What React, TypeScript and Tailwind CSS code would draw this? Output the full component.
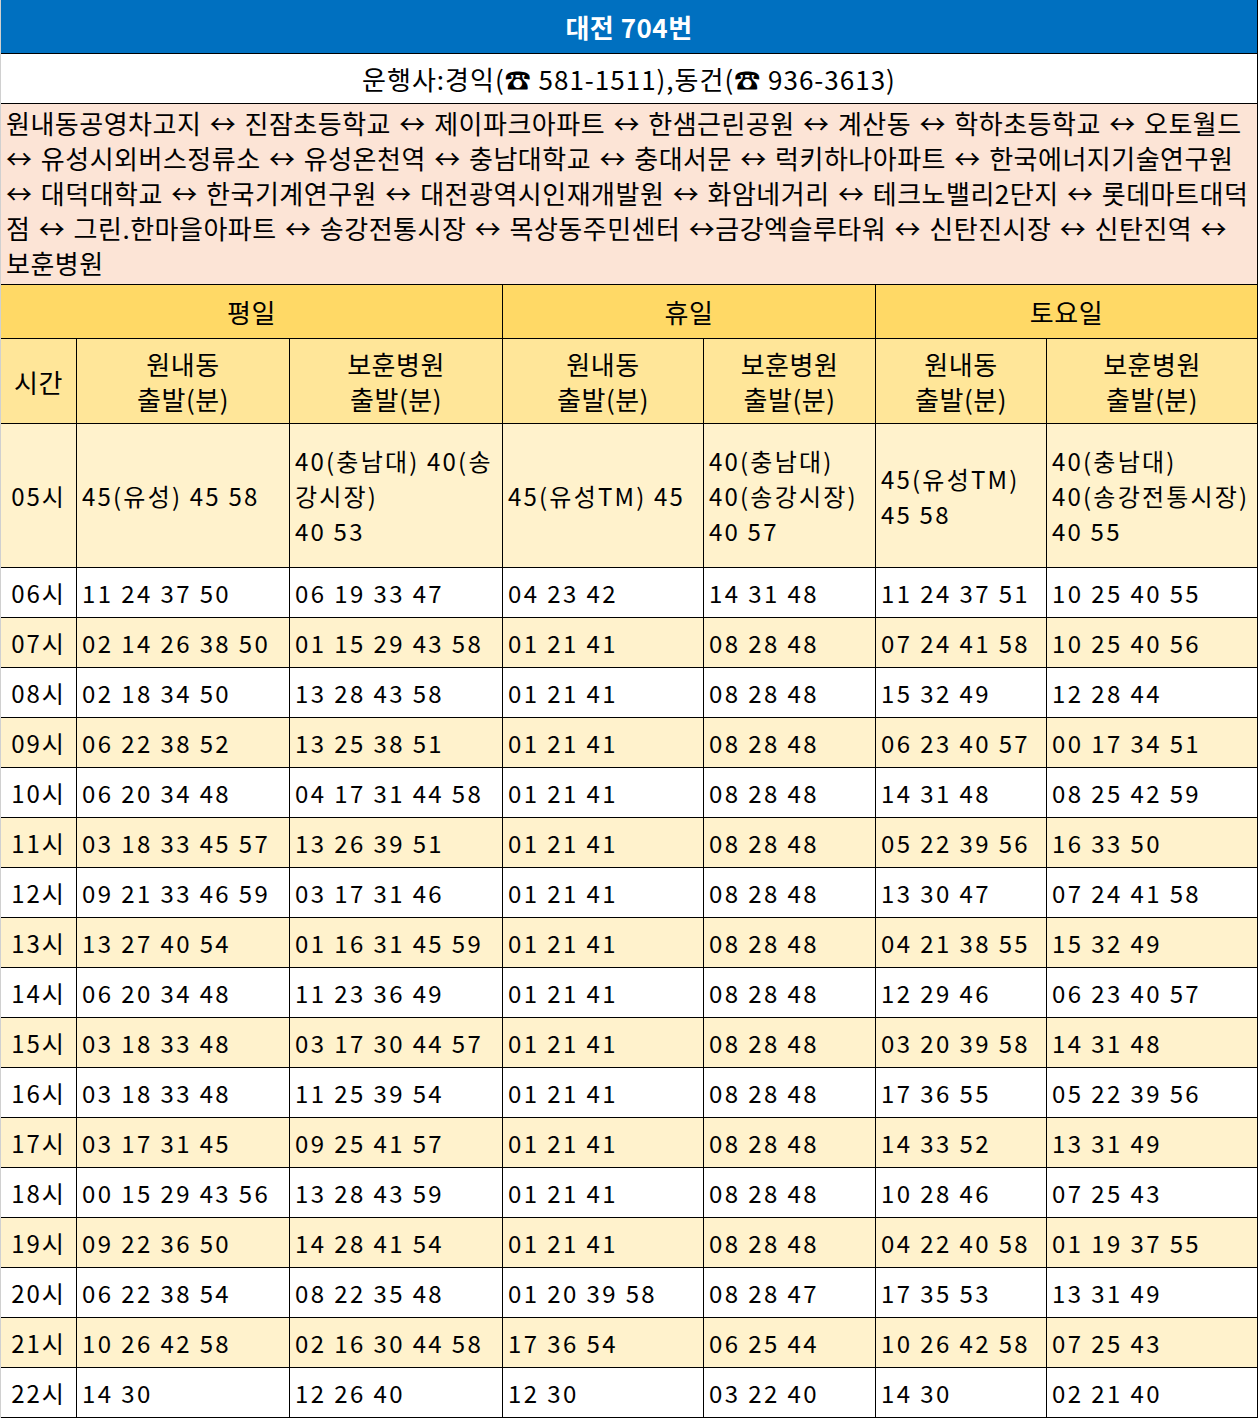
import React from "react";

type Row = [string, string, string, string, string, string, string];

const rows: Row[] = [
  ["06시", "11 24 37 50", "06 19 33 47", "04 23 42", "14 31 48", "11 24 37 51", "10 25 40 55"],
  ["07시", "02 14 26 38 50", "01 15 29 43 58", "01 21 41", "08 28 48", "07 24 41 58", "10 25 40 56"],
  ["08시", "02 18 34 50", "13 28 43 58", "01 21 41", "08 28 48", "15 32 49", "12 28 44"],
  ["09시", "06 22 38 52", "13 25 38 51", "01 21 41", "08 28 48", "06 23 40 57", "00 17 34 51"],
  ["10시", "06 20 34 48", "04 17 31 44 58", "01 21 41", "08 28 48", "14 31 48", "08 25 42 59"],
  ["11시", "03 18 33 45 57", "13 26 39 51", "01 21 41", "08 28 48", "05 22 39 56", "16 33 50"],
  ["12시", "09 21 33 46 59", "03 17 31 46", "01 21 41", "08 28 48", "13 30 47", "07 24 41 58"],
  ["13시", "13 27 40 54", "01 16 31 45 59", "01 21 41", "08 28 48", "04 21 38 55", "15 32 49"],
  ["14시", "06 20 34 48", "11 23 36 49", "01 21 41", "08 28 48", "12 29 46", "06 23 40 57"],
  ["15시", "03 18 33 48", "03 17 30 44 57", "01 21 41", "08 28 48", "03 20 39 58", "14 31 48"],
  ["16시", "03 18 33 48", "11 25 39 54", "01 21 41", "08 28 48", "17 36 55", "05 22 39 56"],
  ["17시", "03 17 31 45", "09 25 41 57", "01 21 41", "08 28 48", "14 33 52", "13 31 49"],
  ["18시", "00 15 29 43 56", "13 28 43 59", "01 21 41", "08 28 48", "10 28 46", "07 25 43"],
  ["19시", "09 22 36 50", "14 28 41 54", "01 21 41", "08 28 48", "04 22 40 58", "01 19 37 55"],
  ["20시", "06 22 38 54", "08 22 35 48", "01 20 39 58", "08 28 47", "17 35 53", "13 31 49"],
  ["21시", "10 26 42 58", "02 16 30 44 58", "17 36 54", "06 25 44", "10 26 42 58", "07 25 43"],
  ["22시", "14 30", "12 26 40", "12 30", "03 22 40", "14 30", "02 21 40"],
];

const routeLines = [
  "원내동공영차고지 ↔ 진잠초등학교 ↔ 제이파크아파트 ↔ 한샘근린공원 ↔ 계산동 ↔ 학하초등학교 ↔ 오토월드",
  "↔ 유성시외버스정류소 ↔ 유성온천역 ↔ 충남대학교 ↔ 충대서문 ↔ 럭키하나아파트 ↔ 한국에너지기술연구원",
  "↔ 대덕대학교 ↔ 한국기계연구원 ↔ 대전광역시인재개발원 ↔ 화암네거리 ↔ 테크노밸리2단지 ↔ 롯데마트대덕",
  "점 ↔ 그린.한마을아파트 ↔ 송강전통시장 ↔ 목상동주민센터 ↔금강엑슬루타워 ↔ 신탄진시장 ↔ 신탄진역 ↔",
  "보훈병원",
];

const cell = "border-r border-b border-black";
const dataCell = `${cell} flex items-center pl-[5px] text-[24px] tracking-[2.4px] whitespace-nowrap leading-[35px]`;

function SubHead({ top }: { top: string }) {
  return (
    <div className={`${cell} bg-[#ffe699] flex flex-col items-center justify-center leading-[35px] text-[26px] tracking-[0.5px]`}>
      <span>{top}</span>
      <span>출발(분)</span>
    </div>
  );
}

function Multi({ lines, bg }: { lines: string[]; bg: string }) {
  return (
    <div className={`${cell} ${bg} flex flex-col justify-center pl-[5px] text-[24px] tracking-[2.2px] whitespace-nowrap leading-[35px]`}>
      {lines.map((l, i) => (
        <span key={i}>{l}</span>
      ))}
    </div>
  );
}

export default function App() {
  return (
    <div className="w-[1258px] border-l border-[#d0d0d0] bg-white text-black text-[26px] tracking-[0.5px] font-['Noto_Sans_CJK_KR','Noto_Sans',sans-serif]">
      <div className={`${cell} h-[54px] bg-[#0070c0] text-white font-bold flex items-center justify-center pb-[1px]`}>
        대전 704번
      </div>
      <div className={`${cell} h-[50px] flex items-center justify-center tracking-[1px]`}>
        운행사:경익(☎ 581-1511),동건(☎ 936-3613)
      </div>
      <div className={`${cell} h-[181px] bg-[#fce4d6] pl-[5px] pt-[1px] leading-[35px] [word-spacing:2px]`}>
        {routeLines.map((l, i) => (
          <div key={i} className="whitespace-nowrap">
            {l}
          </div>
        ))}
      </div>

      <div className="grid grid-cols-[76px_213px_213px_201px_172px_171px_211px]">
        <div className={`${cell} col-span-3 h-[54px] bg-[#ffd966] flex items-center justify-center`}>평일</div>
        <div className={`${cell} col-span-2 h-[54px] bg-[#ffd966] flex items-center justify-center`}>휴일</div>
        <div className={`${cell} col-span-2 h-[54px] bg-[#ffd966] flex items-center justify-center`}>토요일</div>

        <div className={`${cell} h-[85px] bg-[#ffe699] flex items-center justify-center`}>시간</div>
        <SubHead top="원내동" />
        <SubHead top="보훈병원" />
        <SubHead top="원내동" />
        <SubHead top="보훈병원" />
        <SubHead top="원내동" />
        <SubHead top="보훈병원" />

        <div className={`${cell} h-[144px] bg-[#fff2cc] flex items-center justify-center text-[24px] tracking-[2px]`}>05시</div>
        <Multi bg="bg-[#fff2cc]" lines={["45(유성) 45 58"]} />
        <Multi bg="bg-[#fff2cc]" lines={["40(충남대) 40(송", "강시장)", "40 53"]} />
        <Multi bg="bg-[#fff2cc]" lines={["45(유성TM) 45"]} />
        <Multi bg="bg-[#fff2cc]" lines={["40(충남대)", "40(송강시장)", "40 57"]} />
        <Multi bg="bg-[#fff2cc]" lines={["45(유성TM)", "45 58"]} />
        <Multi bg="bg-[#fff2cc]" lines={["40(충남대)", "40(송강전통시장)", "40 55"]} />

        {rows.map((r, i) => {
          const bg = i % 2 === 1 ? "bg-[#fff2cc]" : "bg-white";
          return (
            <React.Fragment key={r[0]}>
              <div className={`${cell} ${bg} h-[50px] flex items-center justify-center text-[24px] tracking-[2px] whitespace-nowrap`}>
                {r[0]}
              </div>
              {r.slice(1).map((v, j) => (
                <div key={j} className={`${dataCell} ${bg} h-[50px]`}>
                  {v}
                </div>
              ))}
            </React.Fragment>
          );
        })}
      </div>
    </div>
  );
}
